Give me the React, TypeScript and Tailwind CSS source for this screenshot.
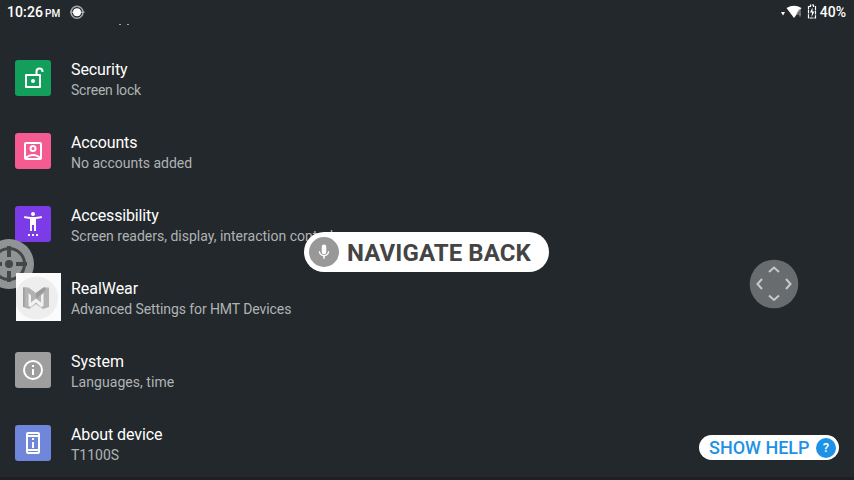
import React from "react";

type Item = { title: string; sub: string; color: string; spacing: string; subSpacing: string; icon: React.ReactNode };

const Glyph = ({ children }: { children: React.ReactNode }) => (
  <svg viewBox="0 0 24 24" className="size-6 fill-white">{children}</svg>
);

const items: Item[] = [
  {
    title: "Security", sub: "Screen lock", color: "bg-[#139f5b]", spacing: "tracking-[-0.1px]", subSpacing: "tracking-[-0.2px]",
    icon: (
      <svg viewBox="0 0 24 24" className="size-6" fill="none" stroke="#fff" strokeWidth="2">
        <path d="M5 9h14v12H5z" strokeLinejoin="round" />
        <path d="M15.500 9V5.500a3 3 0 0 1 6 0V6" />
        <circle cx="12" cy="15" r="2" fill="#fff" stroke="none" />
      </svg>
    ),
  },
  {
    title: "Accounts", sub: "No accounts added", color: "bg-[#f45b90]", spacing: "tracking-[-0.15px]", subSpacing: "tracking-normal",
    icon: (
      <Glyph>
        <path d="M19 3H5a2 2 0 0 0-2 2v14a2 2 0 0 0 2 2h14a2 2 0 0 0 2-2V5a2 2 0 0 0-2-2zm-1.200 16H6.200c1.500-1.300 3.600-2 5.800-2s4.300.7 5.800 2zM19 17.400C17.100 15.900 14.600 15 12 15s-5.100.9-7 2.400V5h14v12.400zM12 13a3.500 3.500 0 1 0 0-7 3.500 3.500 0 0 0 0 7zm0-5a1.500 1.500 0 1 1 0 3 1.500 1.500 0 0 1 0-3z" />
      </Glyph>
    ),
  },
  {
    title: "Accessibility", sub: "Screen readers, display, interaction controls", color: "bg-[#7b3be6]", spacing: "tracking-[-0.15px]", subSpacing: "tracking-normal",
    icon: (
      <Glyph>
        <path d="M20.500 4c-2.610.7-5.670 1-8.500 1s-5.890-.3-8.500-1L3 6c1.860.5 4 .83 6 1v12h2v-6h2v6h2V7c2-.17 4.140-.5 6-1l-.5-2zM12 4a2 2 0 1 0 0-4 2 2 0 0 0 0 4zM7 24h2v-2H7v2zm4 0h2v-2h-2v2zm4 0h2v-2h-2v2z" />
      </Glyph>
    ),
  },
  { title: "RealWear", sub: "Advanced Settings for HMT Devices", color: "", spacing: "tracking-[-0.05px]", subSpacing: "tracking-[-0.085px]", icon: null },
  {
    title: "System", sub: "Languages, time", color: "bg-[#9e9e9e]", spacing: "tracking-normal", subSpacing: "tracking-[0.05px]",
    icon: (
      <Glyph>
        <path d="M11 17h2v-6h-2v6zm1-15a10 10 0 1 0 0 20 10 10 0 0 0 0-20zm0 18a8 8 0 1 1 0-16 8 8 0 0 1 0 16zM11 9h2V7h-2v2z" />
      </Glyph>
    ),
  },
  {
    title: "About device", sub: "T1100S", color: "bg-[#7086db]", spacing: "tracking-[-0.09px]", subSpacing: "tracking-normal",
    icon: (
      <Glyph>
        <path d="M13 7h-2v2h2V7zm0 4h-2v6h2v-6zm4-9.990L7 1a2 2 0 0 0-2 2v18a2 2 0 0 0 2 2h10a2 2 0 0 0 2-2V3a2 2 0 0 0-2-1.990zM17 21H7v-1h10v1zm0-3H7V6h10v12zm0-14H7V3h10v1z" />
      </Glyph>
    ),
  },
];

function RealWearLogo() {
  return (
    <div className="relative z-10 mb-[2px] ml-px mr-[10px] h-12 w-[45px] shrink-0 bg-[#fbfbfb]">
      <svg viewBox="0 0 45 48" className="h-12 w-[45px]">
        <defs>
          <linearGradient id="wing" x1="0" x2="1" y1="0" y2="0">
            <stop offset="0" stopColor="#989898" />
            <stop offset="1" stopColor="#bcbcbc" />
          </linearGradient>
          <filter id="soft"><feGaussianBlur stdDeviation=".6" /></filter>
        </defs>
        <circle cx="20.500" cy="25" r="21.500" fill="#eeeeee" />
        <g filter="url(#soft)">
          <path d="M7 14.500H12.500L20 20 27.500 14.500H33V34L27 36 20 31 13 36 7 34z" fill="#b2b2b2" />
          <path d="M7 14.500H10.500V34.500L7 33.500z" fill="url(#wing)" />
          <path d="M20 20 27.500 14.500H29.500V17L20 26z" fill="#9a9a9a" />
          <path d="M12.500 20V33L15 34 20 29.500 25 34 27.500 33V20L25 22.500V29.500L20 25.500 15 29.500V22.500z" fill="#f2f2f2" />
        </g>
      </svg>
    </div>
  );
}

function StatusBar() {
  return (
    <header className="flex h-6 items-center justify-between pl-[7px] pr-2 font-medium text-white">
      <div className="flex items-center">
        <span className="text-[14px] leading-6 tracking-[0.1px]">10:26</span>
        <span className="ml-[2px] mt-[3px] text-[10px] leading-5">PM</span>
        <svg viewBox="0 0 16 16" className="ml-[9px] size-4" fill="none">
          <circle cx="8" cy="8.300" r="6" stroke="#a4a7a8" strokeWidth="1.500" />
          <path d="M1 8.300h3M12 8.300h3.500" stroke="#a4a7a8" strokeWidth="1.500" />
          <circle cx="8" cy="8.300" r="4" fill="#fff" />
        </svg>
      </div>
      <div className="flex items-center">
        <svg viewBox="0 0 38 16" className="h-4 w-[38px]">
          <path d="M0 8h4L2 11.500z" fill="#fff" />
          <path d="M5.500 4Q13-.5 20.500 4L13 14z" fill="#fff" />
          <path d="M18.500 5.500l-2.500 4.500h4M19 6v6.500" stroke="#8d9193" strokeWidth="1.200" fill="none" />
          <path d="M27.500 2.500h2V1h3v1.500h2v11.500h-7z" fill="none" stroke="#fff" strokeWidth="1.200" strokeDasharray="4 .7" />
          <path d="M31.500 3.500l-2.500 5h2l-.5 4.500 3-5.500h-2z" fill="#fff" />
        </svg>
        <span className="ml-px text-[14px] leading-6">40%</span>
      </div>
    </header>
  );
}

export default function App() {
  return (
    <div className="relative h-[480px] w-[854px] overflow-hidden bg-[#23282c] font-['Roboto','Noto_Sans',sans-serif]">
      <StatusBar />
      <div className="flex h-[18px] gap-[6px] pl-[119px]">
        <i className="h-px w-[2px] bg-[#a0a3a5]" />
        <i className="h-px w-[2px] bg-[#a0a3a5]" />
      </div>
      <main className="flex flex-col">
        {items.map((item) => (
          <section key={item.title} className="flex h-[73px] items-center pl-[15px]">
            {item.icon ? (
              <div className={"mb-[2px] mr-5 flex size-9 shrink-0 items-center justify-center rounded-[3px] " + item.color}>{item.icon}</div>
            ) : (
              <RealWearLogo />
            )}
            <div className="pt-1">
              <h2 className={"text-[16px] leading-5 text-white " + item.spacing}>{item.title}</h2>
              <p className={"text-[14px] leading-[21px] text-[#b0b3b4] " + item.subSpacing}>{item.sub}</p>
            </div>
          </section>
        ))}
      </main>
      <div className="absolute bottom-0 left-0 h-[3px] w-full bg-[#1d1f25]" />

      <svg viewBox="0 0 50 50" className="absolute left-[-16px] top-[239px] size-[50px]">
        <circle cx="25" cy="25" r="25" fill="#919495" />
        <g stroke="#444648" fill="none" strokeWidth="3">
          <circle cx="25" cy="25" r="15.500" />
          <path d="M25 7v11M25 32v11M7 25h11M32 25h11" strokeWidth="4" />
        </g>
        <circle cx="25" cy="25" r="4" fill="#444648" />
      </svg>

      <div className="absolute left-[304px] top-[232px] flex h-10 w-[245px] items-center rounded-full bg-white pl-[5px]">
        <span className="flex size-[30px] items-center justify-center rounded-full bg-[#989898]">
          <svg viewBox="0 0 24 24" className="size-[18px] fill-white">
            <path d="M12 15a3 3 0 0 0 3-3V5a3 3 0 0 0-6 0v7a3 3 0 0 0 3 3zm5.300-4c0 3-2.540 5.100-5.300 5.100S6.700 14 6.700 11H5c0 3.410 2.720 6.230 6 6.720V21h2v-3.280c3.280-.48 6-3.300 6-6.720h-1.700z" />
          </svg>
        </span>
        <span className="ml-2 mt-[2px] whitespace-nowrap text-[24px] font-bold leading-10 tracking-[0.1px] text-[#444444]">NAVIGATE BACK</span>
      </div>

      <svg viewBox="0 0 50 50" className="absolute left-[749px] top-[259px] size-[50px]">
        <circle cx="25" cy="25" r="24.300" fill="#686c6e" />
        <path d="M20 13l5-4.500 5 4.500M20 36.500l5 4.500 5-4.500M13 20l-4.500 5 4.500 5M37 20l4.500 5-4.500 5" fill="none" stroke="#c8c9ca" strokeWidth="2" />
      </svg>

      <div className="absolute left-[699px] top-[435px] flex h-[25px] w-[140px] items-center rounded-full bg-white pl-[10px]">
        <span className="whitespace-nowrap text-[18px] font-medium leading-[25px] text-[#1e92e6]">SHOW HELP</span>
        <span className="absolute right-[3px] top-[2.500px] flex size-5 items-center justify-center rounded-full bg-[#1e92e6] text-[13px] font-medium text-white">?</span>
      </div>
    </div>
  );
}
